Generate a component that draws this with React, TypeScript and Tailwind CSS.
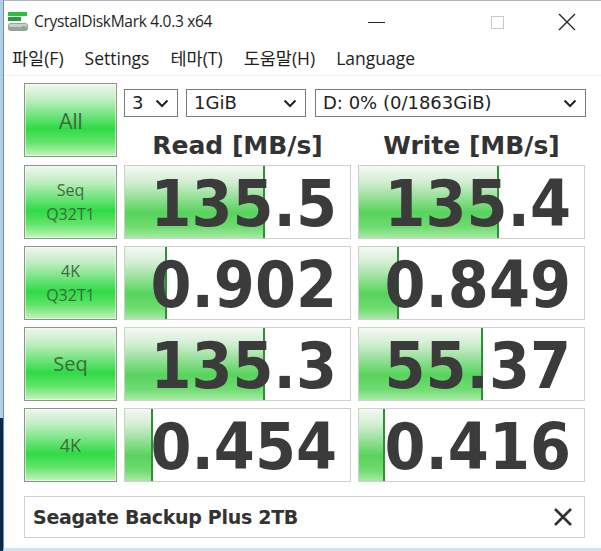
import React from 'react';

type Row = { top: string; bottom?: string; read: string; write: string; readFill: number; writeFill: number };

const rows: Row[] = [
  { top: 'Seq', bottom: 'Q32T1', read: '135.5', write: '135.4', readFill: 140, writeFill: 140 },
  { top: '4K', bottom: 'Q32T1', read: '0.902', write: '0.849', readFill: 42, writeFill: 40 },
  { top: 'Seq', read: '135.3', write: '55.37', readFill: 140, writeFill: 124 },
  { top: '4K', read: '0.454', write: '0.416', readFill: 28, writeFill: 26 },
];

const greenBtn =
  'border border-[#8c948c] bg-[linear-gradient(to_bottom,#eef7ee_0%,#bfeec0_22%,#2fdb45_62%,#5fe468_80%,#c4f4bc_100%)] shadow-[inset_0_0_0_1px_rgba(255,255,255,0.5)] flex flex-col items-center justify-center text-[#3f6a3f] font-["Open_Sans",sans-serif]';

const Chevron = () => (
  <svg width="14" height="9" viewBox="0 0 14 9" className="shrink-0">
    <path d="M1.5 1.5 L7 7 L12.5 1.5" fill="none" stroke="#222" strokeWidth="2" />
  </svg>
);

const Select: React.FC<{ label: string; className: string }> = ({ label, className }) => (
  <div className={`h-[28px] border border-[#7a7a7a] bg-white flex items-center justify-between pl-[7px] pr-[8px] text-[18px] text-[#222] font-["DejaVu_Sans",sans-serif] ${className}`}>
    <span className="leading-none">{label}</span>
    <Chevron />
  </div>
);

const Value: React.FC<{ value: string; fill: number }> = ({ value, fill }) => (
  <div className="relative w-[227px] h-full border border-[#cfcfcf] bg-white flex items-center justify-end pr-[13px] pt-[4px]">
    <div
      className="absolute left-0 top-0 bottom-0 bg-[linear-gradient(to_bottom,#f4f8f4_0%,#d2eed2_22%,#58d35c_65%,#6fdc70_85%,#a8eaa5_100%)] border-r-2 border-[#2f8f35]"
      style={{ width: fill }}
    />
    <span className="relative text-[59px] leading-[62px] font-bold text-[#3b3b3b] font-['DejaVu_Sans',sans-serif] scale-y-[1.08]">
      {value}
    </span>
  </div>
);

export default function App() {
  return (
    <div className="w-[601px] h-[551px] flex bg-white overflow-hidden">
      <div className="w-[3px] flex flex-col">
        <div className="h-[418px] bg-[#b8cce0]" />
        <div className="flex-1 bg-[#0f2848]" />
      </div>
      <div className="flex-1 flex flex-col border-l border-[#5c92c6] border-t border-t-[#aab8c6] border-b-[3px] border-b-[#cfe3f2] bg-white">
        {/* title bar */}
        <div className="h-[40px] flex items-center pl-[3px] pt-[2px] font-['Open_Sans','Noto_Sans_CJK_KR',sans-serif] text-[#1e1e1e]">
          <svg width="22" height="22" viewBox="0 0 22 22" className="mr-[5px]">
            <rect x="1" y="1" width="19" height="4" fill="#2cbf3c" />
            <rect x="1" y="6" width="13" height="4" fill="#1fa32f" />
            <rect x="1" y="12" width="20" height="8" rx="3" fill="#9aa39a" />
            <rect x="2" y="13" width="18" height="3" rx="1.5" fill="#c9cfc9" />
            <rect x="15" y="15" width="3" height="2" fill="#4fd04f" />
          </svg>
          <span className="text-[15.5px] tracking-[-0.3px]">CrystalDiskMark 4.0.3 x64</span>
          <div className="ml-auto flex items-center">
            <div className="w-[17px] h-[1px] bg-[#222] mr-[106px]" />
            <div className="w-[13px] h-[13px] border border-[#c8c8c8] mr-[54px]" />
            <svg width="18" height="18" viewBox="0 0 18 18" className="mr-[25px]">
              <path d="M1 1 L17 17 M17 1 L1 17" stroke="#222" strokeWidth="1.3" />
            </svg>
          </div>
        </div>
        {/* menu bar */}
        <div className="h-[35px] flex items-center pl-[8px] gap-[21px] text-[17.5px] text-[#1e1e1e] font-['Open_Sans','Noto_Sans_CJK_KR',sans-serif] border-b border-[#f0f0f0]">
          <span>파일(F)</span>
          <span>Settings</span>
          <span>테마(T)</span>
          <span>도움말(H)</span>
          <span>Language</span>
        </div>

        {/* content */}
        <div className="flex flex-col pl-[20px] pt-[7px]">
          <div className="flex gap-[7px] h-[74px]">
            <div className={`w-[93px] h-full ${greenBtn}`}>
              <span className="text-[22px] leading-none tracking-[-0.5px]">All</span>
            </div>
            <div className="flex flex-col">
              <div className="flex mt-[6px]">
                <Select label="3" className="w-[54px]" />
                <Select label="1GiB" className="w-[120px] ml-[8px]" />
                <Select label="D: 0% (0/1863GiB)" className="w-[271px] ml-[9px]" />
              </div>
              <div className="flex gap-[7px] mt-[16px] text-[25px] leading-none font-bold text-[#333] font-['DejaVu_Sans',sans-serif]">
                <div className="w-[227px] text-center">Read [MB/s]</div>
                <div className="w-[227px] text-center">Write [MB/s]</div>
              </div>
            </div>
          </div>

          <div className="flex flex-col gap-[7px] mt-[8px]">
            {rows.map((r, i) => (
              <div key={i} className="flex gap-[7px] h-[74px]">
                <div className={`w-[93px] h-full ${greenBtn}`}>
                  {r.bottom ? (
                    <>
                      <span className="text-[16px] leading-[24px]">{r.top}</span>
                      <span className="text-[16px] leading-[24px]">{r.bottom}</span>
                    </>
                  ) : (
                    <span className={r.top === 'Seq' ? 'text-[20px] leading-none' : 'text-[18px] leading-none'}>{r.top}</span>
                  )}
                </div>
                <Value value={r.read} fill={r.readFill} />
                <Value value={r.write} fill={r.writeFill} />
              </div>
            ))}
          </div>

          <div className="mt-[14px] w-[561px] h-[42px] border border-[#cfcfcf] bg-white flex items-center justify-between pl-[8px] pr-[11px]">
            <span className="text-[19px] font-bold text-[#333] font-['DejaVu_Sans',sans-serif] tracking-[-0.3px]">Seagate Backup Plus 2TB</span>
            <svg width="20" height="20" viewBox="0 0 20 20">
              <path d="M2 2 L18 18 M18 2 L2 18" stroke="#333" strokeWidth="2.6" />
            </svg>
          </div>
        </div>
      </div>
    </div>
  );
}
